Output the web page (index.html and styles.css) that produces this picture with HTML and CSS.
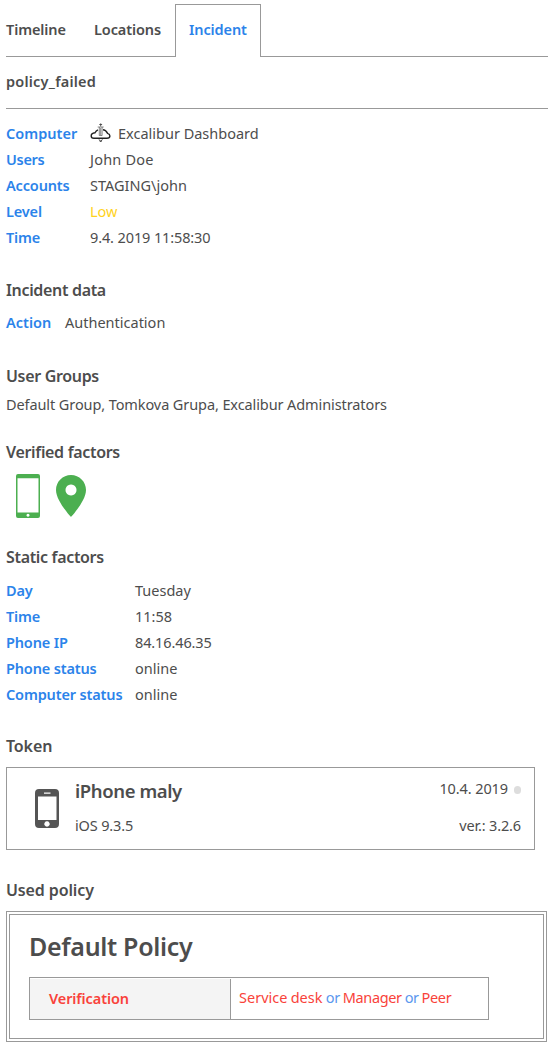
FILE: index.html
```html
<!DOCTYPE html>
<html lang="en">
<head>
<meta charset="utf-8">
<title>Incident</title>
<link rel="stylesheet" href="styles.css">
</head>
<body>
<main class="page">
  <nav class="tabs">
    <a class="tab tab-timeline">Timeline</a>
    <a class="tab tab-locations">Locations</a>
    <a class="tab tab-active">Incident</a>
    <span class="tab-rest"></span>
  </nav>
  <div class="event">policy_failed</div>

  <dl class="facts facts-summary">
    <dt class="wide">Computer</dt>
    <dd class="with-icon">
      <svg class="logo" width="21" height="20" viewBox="0 0 21 20" fill="none" stroke="#222" stroke-width="1.4">
        <path d="M8 6.800C6.300 7.400 5.600 8.500 5 9.800C2.800 10 1.200 11.400 1.200 12.900c0 1.500 1 2.300 2.700 2.300H16.800c2 0 3.100-.9 3.100-2.300 0-1.200-.8-2.100-2.300-2.500C16.500 8.400 15 6.800 13 6.800"/>
        <path d="M9.300 4v8.500h2.800V4M10.700 5v7M7.700 4h6" stroke="#555" stroke-width=".7"/>
        <path d="M10.700 .4v3M9.300 1.500h2.800M9 16.300l1.700 2.500 1.700-2.500M9.500 18h2.500" stroke="#444" stroke-width=".9"/>
      </svg>
      <span>Excalibur Dashboard</span>
    </dd>
    <dt class="users">Users</dt><dd class="john">John Doe</dd>
    <dt>Accounts</dt><dd>STAGING\john</dd>
    <dt>Level</dt><dd class="low">Low</dd>
    <dt>Time</dt><dd class="date">9.4. 2019 11:58:30</dd>
  </dl>

  <section class="block block-data">
    <h2>Incident data</h2>
    <dl class="facts facts-data">
      <dt class="wide">Action</dt><dd>Authentication</dd>
    </dl>
  </section>

  <section class="block block-groups">
    <h2>User Groups</h2>
    <p class="groups">Default Group, Tomkova Grupa, Excalibur Administrators</p>
  </section>

  <section class="block block-verified">
    <h2>Verified factors</h2>
    <div class="factors">
      <svg width="24" height="44" viewBox="0 0 24 44">
        <path fill="#4caf50" fill-rule="evenodd" d="M2 0H22Q24 0 24 2V42Q24 44 22 44H2Q0 44 0 42V2Q0 0 2 0ZM1.500 4.300V38.500H22.500V4.300ZM12 39.700a1.500 1.500 0 1 0 .01 0Z"/>
      </svg>
      <svg width="30" height="44" viewBox="0 0 30 44">
        <path fill="#4caf50" fill-rule="evenodd" d="M15 1C6.700 1 0 7.700 0 16c0 11 15 27 15 27s15-16 15-27C30 7.700 23.300 1 15 1ZM15 10.500a5.500 5.500 0 1 0 .01 0Z"/>
      </svg>
    </div>
  </section>

  <section class="block block-static">
    <h2>Static factors</h2>
    <dl class="facts facts-static">
      <dt>Day</dt><dd>Tuesday</dd>
      <dt>Time</dt><dd>11:58</dd>
      <dt>Phone IP</dt><dd class="date">84.16.46.35</dd>
      <dt>Phone status</dt><dd>online</dd>
      <dt>Computer status</dt><dd>online</dd>
    </dl>
  </section>

  <section class="block block-token">
    <h2 class="wide-title">Token</h2>
    <div class="token">
      <svg class="token-icon" width="24" height="39" viewBox="0 0 24 39">
        <path fill="#555" fill-rule="evenodd" d="M4 0H20Q24 0 24 4V35Q24 39 20 39H4Q0 39 0 35V4Q0 0 4 0ZM3 7.500V31H21.500V7.500ZM9 3.500V4.800H15.500V3.500ZM12 32.300a2.700 2.700 0 1 0 .01 0Z"/>
      </svg>
      <div class="token-main">
        <div class="token-name">iPhone maly</div>
        <div class="token-detail">iOS 9.3.5</div>
      </div>
      <div class="token-side">
        <div class="token-date"><span>10.4. 2019</span><i class="dot"></i></div>
        <div class="token-detail">ver.: 3.2.6</div>
      </div>
    </div>
  </section>

  <section class="block block-policy">
    <h2 class="wide-title">Used policy</h2>
    <div class="policy">
      <h3>Default Policy</h3>
      <div class="rule">
        <div class="rule-name">Verification</div>
        <div class="rule-value">Service desk <span class="rule-more"><em>or</em> Manager <em>or</em> Peer</span></div>
      </div>
    </div>
  </section>
</main>
</body>
</html>
```
FILE: styles.css
```css
* { box-sizing: border-box; }
body {
  margin: 0;
  background: #fff;
  color: #4d4d4d;
  font: 14.5px/26px "Noto Sans", "Open Sans", sans-serif;
  white-space: nowrap;
}
h2, h3, dl, dd, p { margin: 0; }
.page { padding: 4px 7px 0 6px; height: 1045px; overflow: hidden; }

.tabs { display: flex; height: 53px; font-weight: 600; line-height: 51px; letter-spacing: -.1px; }
.tab { border-bottom: 1px solid #999; }
.tab-timeline { width: 88px; }
.tab-locations { width: 81px; }
.tab-active { width: 86px; padding-left: 13px; color: #2b83ea; border: 1px solid #999; border-bottom: 0; line-height: 49px; }
.tab-rest { flex: 1; border-bottom: 1px solid #999; }
.event { height: 52px; border-bottom: 1px solid #999; font-weight: 600; line-height: 48px; letter-spacing: .22px; }

.facts { display: grid; grid-auto-rows: 26px; }
.facts dt { color: #2b83ea; font-weight: 600; letter-spacing: -.15px; }
.facts .wide { letter-spacing: .02px; }
.facts .users { letter-spacing: -.3px; }
.facts-summary { grid-template-columns: 84px 1fr; margin-top: 11px; }
.facts-data { grid-template-columns: 59px 1fr; margin-top: 5px; }
.facts-static { grid-template-columns: 129px 1fr; margin-top: 6px; }
.with-icon { display: flex; gap: 7px; }
.logo { margin-top: 3px; }
.john { letter-spacing: .2px; }
.date { letter-spacing: -.12px; }
.low { color: #ffd21c; }

h2 { font-size: 16px; line-height: 28px; height: 28px; font-weight: 600; letter-spacing: -.33px; }
.wide-title { letter-spacing: -.12px; }
.block-data { margin-top: 26px; }
.block-groups { margin-top: 27px; }
.groups { margin-top: 1px; letter-spacing: -.095px; }
.block-verified { margin-top: 21px; }
.factors { display: flex; gap: 16px; margin: 8px 0 0 10px; height: 44px; }
.block-static { margin-top: 25px; }
.block-token { margin-top: 25px; }
.block-policy { margin-top: 26px; }

.token { display: flex; width: 529px; height: 83px; margin-top: 7px; padding: 7px 13px 0 28px; border: 1px solid #999; }
.token-icon { margin-top: 14px; }
.token-main { margin-left: 16px; flex: 1; }
.token-name { height: 37px; line-height: 32px; font-size: 18.5px; font-weight: 600; letter-spacing: -.4px; }
.token-detail { letter-spacing: -.15px; }
.token-side { text-align: right; }
.token-date { display: flex; align-items: center; justify-content: flex-end; gap: 6px; height: 26px; margin-bottom: 11px; letter-spacing: -.1px; }
.dot { width: 7px; height: 8px; border-radius: 4px; background: #ddd; margin-top: 3px; }

.policy { width: 541px; height: 131px; margin-top: 7px; padding: 13px 19px; border: 4px double #999; }
h3 { font-size: 25px; line-height: 36px; font-weight: 600; letter-spacing: -.3px; }
.rule { display: flex; width: 460px; height: 43px; margin-top: 13px; padding-top: 1px; border: 1px solid #999; color: #f9423a; line-height: 38px; }
.rule-name { width: 201px; padding-left: 19px; background: #f4f4f4; border-right: 1px solid #999; font-weight: 600; letter-spacing: -.1px; }
.rule-value { padding-left: 8px; line-height: 37px; word-spacing: -.5px; }
.rule-more { letter-spacing: -.35px; }
.rule-value em { font-style: normal; color: #5b98ee; }
```
